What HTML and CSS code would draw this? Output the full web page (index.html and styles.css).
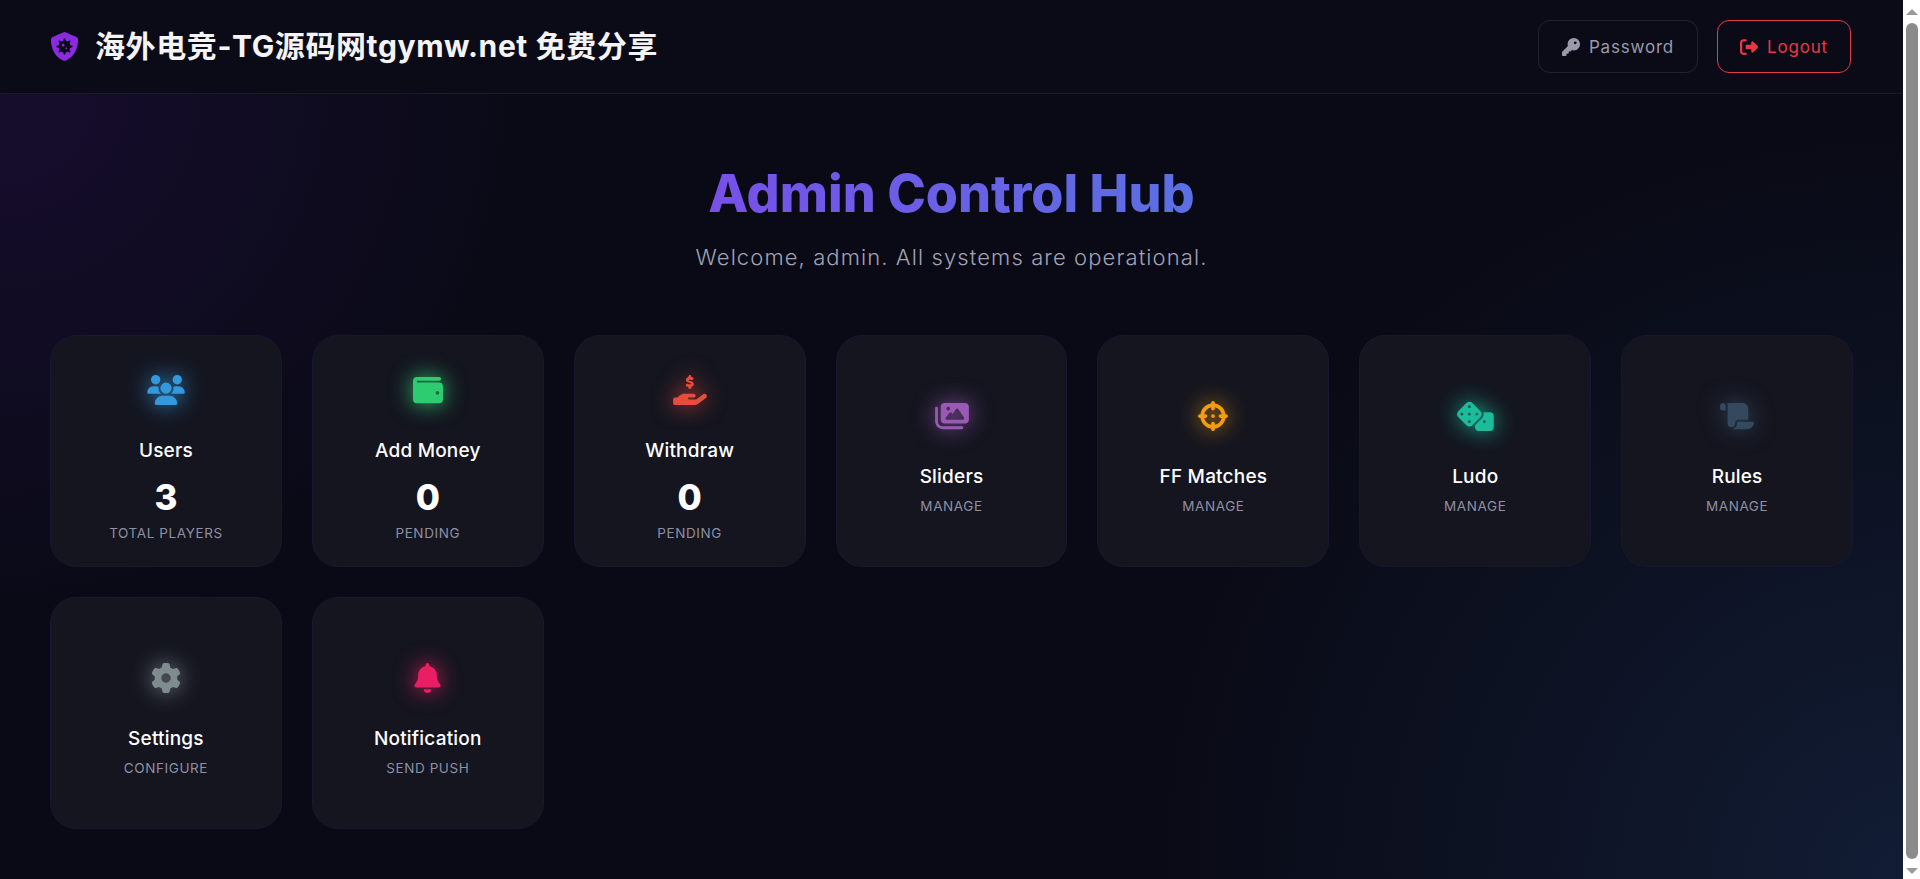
FILE: index.html
```html
<!DOCTYPE html>
<html lang="en">
<head>
<meta charset="utf-8">
<title>Admin Control Hub</title>
<link rel="stylesheet" href="styles.css">
</head>
<body>
<div class="page">
<header class="topbar">
  <div class="brand">
    <svg class="brand-icon" viewBox="0 0 512 512"><path d="M269.4 2.9C265.2 1 260.7 0 256 0s-9.2 1-13.4 2.9L54.3 82.8c-22 9.3-38.4 31-38.3 57.2c.5 99.2 41.3 280.7 213.6 363.2c16.7 8 36.1 8 52.8 0C454.7 420.7 495.5 239.2 496 140c.1-26.2-16.3-47.9-38.3-57.2L269.4 2.9zM256 112c8.8 0 16 7.2 16 16c0 33 39.9 49.5 63.2 26.2c6.2-6.2 16.4-6.2 22.6 0s6.2 16.4 0 22.6c-23.3 23.3-6.8 63.2 26.2 63.2c8.8 0 16 7.2 16 16s-7.2 16-16 16c-33 0-49.5 39.9-26.2 63.2c6.2 6.2 6.2 16.4 0 22.6s-16.4 6.2-22.6 0C312 335.5 272 352 272 385c0 8.8-7.2 16-16 16s-16-7.2-16-16c0-33-39.9-49.5-63.2-26.2c-6.2 6.2-16.4 6.2-22.6 0s-6.2-16.4 0-22.6C177.5 312 161 272 128 272c-8.8 0-16-7.2-16-16s7.2-16 16-16c33 0 49.5-39.9 26.2-63.2c-6.2-6.2-6.2-16.4 0-22.6s16.4-6.2 22.6 0C200 177.5 240 161 240 128c0-8.8 7.2-16 16-16zM232 256a24 24 0 1 0 0-48 24 24 0 1 0 0 48zm72 32a16 16 0 1 0 -32 0 16 16 0 1 0 32 0z"/></svg>
    <span class="brand-text">海外电竞-TG源码网tgymw.net 免费分享</span>
  </div>
  <nav class="actions">
    <a class="btn btn-muted"><svg class="btn-icon" viewBox="0 0 512 512"><path d="M336 352c97.2 0 176-78.8 176-176S433.2 0 336 0S160 78.8 160 176c0 18.7 2.9 36.8 8.3 53.7L7 391c-4.5 4.5-7 10.6-7 17v80c0 13.3 10.7 24 24 24h80c13.3 0 24-10.7 24-24V448h40c13.3 0 24-10.7 24-24V384h40c6.4 0 12.5-2.5 17-7l33.3-33.3c16.9 5.4 35 8.3 53.7 8.3zM376 96a40 40 0 1 1 0 80 40 40 0 1 1 0-80z"/></svg>Password</a>
    <a class="btn btn-danger"><svg class="btn-icon" viewBox="0 0 512 512"><path d="M377.9 105.9L500.7 228.7c7.2 7.2 11.3 17.1 11.3 27.3s-4.1 20.1-11.3 27.3L377.9 406.1c-6.4 6.4-15 9.9-24 9.9c-18.7 0-33.9-15.2-33.9-33.9l0-62.1-128 0c-17.7 0-32-14.3-32-32l0-64c0-17.7 14.3-32 32-32l128 0 0-62.1c0-18.7 15.2-33.9 33.9-33.9c9 0 17.6 3.6 24 9.9zM160 96L96 96c-17.7 0-32 14.3-32 32l0 256c0 17.7 14.3 32 32 32l64 0c17.7 0 32 14.3 32 32s-14.3 32-32 32l-64 0c-53 0-96-43-96-96L0 128C0 75 43 32 96 32l64 0c17.7 0 32 14.3 32 32s-14.3 32-32 32z"/></svg>Logout</a>
  </nav>
</header>
<main class="content">
  <section class="hero">
    <h1 class="hero-title">Admin Control Hub</h1>
    <p class="hero-sub">Welcome, admin. All systems are operational.</p>
  </section>
  <section class="grid">
    <a class="card">
      <span class="card-icon c-blue"><svg class="w40" viewBox="0 0 640 512"><path d="M144 0a80 80 0 1 1 0 160A80 80 0 1 1 144 0zM512 0a80 80 0 1 1 0 160A80 80 0 1 1 512 0zM0 298.7C0 239.8 47.8 192 106.7 192h42.7c15.9 0 31 3.5 44.6 9.7c-1.3 7.2-1.9 14.7-1.9 22.3c0 38.2 16.8 72.5 43.3 96c-.2 0-.4 0-.7 0H21.3C9.6 320 0 310.4 0 298.7zM405.3 320c-.2 0-.4 0-.7 0c26.6-23.5 43.3-57.8 43.3-96c0-7.6-.7-15-1.9-22.3c13.6-6.3 28.7-9.7 44.6-9.7h42.7C592.2 192 640 239.8 640 298.7c0 11.8-9.6 21.3-21.3 21.3H405.3zM224 224a96 96 0 1 1 192 0 96 96 0 1 1 -192 0zM128 485.3C128 411.7 187.7 352 261.3 352H378.7C452.3 352 512 411.7 512 485.3c0 14.7-11.9 26.7-26.7 26.7H154.7c-14.7 0-26.7-11.9-26.7-26.7z"/></svg></span>
      <h3 class="card-title">Users</h3>
      <div class="card-value">3</div>
      <div class="card-label">Total Players</div>
    </a>
    <a class="card">
      <span class="card-icon c-green"><svg viewBox="0 0 512 512"><path d="M64 32C28.7 32 0 60.7 0 96V416c0 35.3 28.7 64 64 64H448c35.3 0 64-28.7 64-64V192c0-35.3-28.7-64-64-64H80c-8.8 0-16-7.2-16-16s7.2-16 16-16H448c17.7 0 32-14.3 32-32s-14.3-32-32-32H64zM416 272a32 32 0 1 1 0 64 32 32 0 1 1 0-64z"/></svg></span>
      <h3 class="card-title">Add Money</h3>
      <div class="card-value">0</div>
      <div class="card-label">Pending</div>
    </a>
    <a class="card">
      <span class="card-icon c-red"><svg class="w36" viewBox="0 0 576 512"><path d="M312 24V34.5c6.4 1.2 12.6 2.7 18.2 4.2c12.8 3.4 20.4 16.6 17 29.4s-16.6 20.4-29.4 17c-10.9-2.9-21.1-4.9-30.2-5c-7.3-.1-14.7 1.7-19.4 4.4c-2.1 1.3-3.1 2.4-3.5 3c-.3 .5-.7 1.2-.7 2.8c0 .3 0 .5 0 .6c.2 .2 .9 1.2 3.3 2.6c5.8 3.5 14.4 6.2 26.5 9.8l.5 .1c10.3 3.1 23.7 7.1 34.4 13.6c11.8 7.2 22.8 18.9 23.1 37.2c.3 18.7-9.2 32.3-21.9 40.1c-6.1 3.8-12.8 6.3-19.8 7.7V216c0 13.3-10.7 24-24 24s-24-10.7-24-24V205.2c-9-2-17.4-4.8-24.7-7.3c-1.9-.6-3.7-1.2-5.5-1.8c-12.6-4.2-19.4-17.8-15.2-30.4s17.8-19.4 30.4-15.2c2.3 .8 4.5 1.5 6.6 2.2c12 4 20.4 6.8 29.6 7.1c7.7 .3 14.7-1.4 18.9-4c2.1-1.3 3.1-2.5 3.6-3.3c.4-.7 .9-1.9 .8-4.1l0-.2c0-1 0-2.1-4-4.6c-5.7-3.5-14.2-6.2-26.3-9.9l-1.9-.6c-10-3-22.7-6.9-32.9-13.1c-11.7-7.1-23-18.5-23.1-36.8c-.1-19.1 10.7-32.2 22.9-39.5c6.6-3.9 13.8-6.4 21-7.9V24c0-13.3 10.7-24 24-24s24 10.7 24 24zM568.2 336.3c13.1 17.8 9.3 42.8-8.5 55.9L433.1 485.5c-23.4 17.2-51.6 26.5-80.7 26.5H192 32c-17.7 0-32-14.3-32-32V416c0-17.7 14.3-32 32-32H68.8l44.9-36c22.7-18.2 50.9-28 80-28H272h16 64c17.7 0 32 14.3 32 32s-14.3 32-32 32H288 272c-8.8 0-16 7.2-16 16s7.2 16 16 16H392.6l119.7-88.2c17.8-13.1 42.8-9.3 55.9 8.5z"/></svg></span>
      <h3 class="card-title">Withdraw</h3>
      <div class="card-value">0</div>
      <div class="card-label">Pending</div>
    </a>
    <a class="card">
      <span class="card-icon c-purple"><svg class="w36" viewBox="0 0 576 512"><path d="M160 32c-35.3 0-64 28.7-64 64V320c0 35.3 28.7 64 64 64H512c35.3 0 64-28.7 64-64V96c0-35.3-28.7-64-64-64H160zM396 138.7l96 144c4.9 7.4 5.4 16.8 1.2 24.6S480.9 320 472 320H328 280 200c-9.2 0-17.6-5.3-21.6-13.6s-2.9-18.2 2.9-25.4l64-80c4.6-5.7 11.4-9 18.7-9s14.2 3.3 18.7 9l17.3 21.6 56-84C360.5 132 368 128 376 128s15.5 4 20 10.7zM192 128a32 32 0 1 1 64 0 32 32 0 1 1 -64 0zM48 120c0-13.3-10.7-24-24-24S0 106.7 0 120V344c0 75.1 60.9 136 136 136H456c13.3 0 24-10.7 24-24s-10.7-24-24-24H136c-48.6 0-88-39.4-88-88V120z"/></svg></span>
      <h3 class="card-title">Sliders</h3>
      <div class="card-label">Manage</div>
    </a>
    <a class="card">
      <span class="card-icon c-orange"><svg viewBox="0 0 512 512"><path d="M256 0c17.7 0 32 14.3 32 32V42.4c93.7 13.9 167.7 88 181.6 181.6H480c17.7 0 32 14.3 32 32s-14.3 32-32 32H469.6c-13.9 93.7-88 167.7-181.6 181.6V480c0 17.7-14.3 32-32 32s-32-14.3-32-32V469.6C130.3 455.7 56.3 381.7 42.4 288H32c-17.7 0-32-14.3-32-32s14.3-32 32-32H42.4C56.3 130.3 130.3 56.3 224 42.4V32c0-17.7 14.3-32 32-32zM107.4 288c12.5 58.3 58.4 104.1 116.6 116.6V384c0-17.7 14.3-32 32-32s32 14.3 32 32v20.6c58.3-12.5 104.1-58.4 116.6-116.6H384c-17.7 0-32-14.3-32-32s14.3-32 32-32h20.6C392.1 165.7 346.3 119.9 288 107.4V128c0 17.7-14.3 32-32 32s-32-14.3-32-32V107.4C165.7 119.9 119.9 165.7 107.4 224H128c17.7 0 32 14.3 32 32s-14.3 32-32 32H107.4zM256 224a32 32 0 1 1 0 64 32 32 0 1 1 0-64z"/></svg></span>
      <h3 class="card-title">FF Matches</h3>
      <div class="card-label">Manage</div>
    </a>
    <a class="card">
      <span class="card-icon c-teal"><svg class="w40" viewBox="0 0 640 512"><path d="M274.9 34.3c-28.1-28.1-73.7-28.1-101.8 0L34.3 173.1c-28.1 28.1-28.1 73.7 0 101.8L173.1 413.7c28.1 28.1 73.7 28.1 101.8 0L413.7 274.9c28.1-28.1 28.1-73.7 0-101.8L274.9 34.3zM200 224a24 24 0 1 1 48 0 24 24 0 1 1 -48 0zM96 200a24 24 0 1 1 0 48 24 24 0 1 1 0-48zM224 376a24 24 0 1 1 0-48 24 24 0 1 1 0 48zM352 200a24 24 0 1 1 0 48 24 24 0 1 1 0-48zM224 120a24 24 0 1 1 0-48 24 24 0 1 1 0 48zm96 328c0 35.3 28.7 64 64 64H576c35.3 0 64-28.7 64-64V256c0-35.3-28.7-64-64-64H461.7c11.6 36 3.1 77-25.4 105.5L320 413.8V448zM480 328a24 24 0 1 1 0 48 24 24 0 1 1 0-48z"/></svg></span>
      <h3 class="card-title">Ludo</h3>
      <div class="card-label">Manage</div>
    </a>
    <a class="card">
      <span class="card-icon c-slate"><svg class="w36" viewBox="0 0 576 512"><path d="M0 80v48c0 17.7 14.3 32 32 32H48 96V80c0-26.5-21.5-48-48-48S0 53.5 0 80zM112 32c10 13.4 16 30 16 48V384c0 35.3 28.7 64 64 64s64-28.7 64-64v-5.3c0-32.4 26.3-58.7 58.7-58.7H480V128c0-53-43-96-96-96H112zM464 480c61.9 0 112-50.1 112-112c0-8.8-7.2-16-16-16H314.7c-14.7 0-26.7 11.9-26.7 26.7V384c0 53-43 96-96 96H368h96z"/></svg></span>
      <h3 class="card-title">Rules</h3>
      <div class="card-label">Manage</div>
    </a>
    <a class="card">
      <span class="card-icon c-gray"><svg viewBox="0 0 512 512"><path d="M495.9 166.6c3.2 8.7 .5 18.4-6.4 24.6l-43.3 39.4c1.1 8.3 1.7 16.8 1.7 25.4s-.6 17.1-1.7 25.4l43.3 39.4c6.9 6.2 9.6 15.9 6.4 24.6c-4.4 11.9-9.7 23.3-15.8 34.3l-4.7 8.1c-6.6 11-14 21.4-22.1 31.2c-5.9 7.2-15.7 9.6-24.5 6.8l-55.7-17.7c-13.4 10.3-28.2 18.9-44 25.4l-12.5 57.1c-2 9.1-9 16.3-18.2 17.8c-13.8 2.3-28 3.5-42.5 3.5s-28.7-1.2-42.5-3.5c-9.2-1.5-16.2-8.7-18.2-17.8l-12.5-57.1c-15.8-6.5-30.6-15.1-44-25.4L83.1 425.9c-8.8 2.8-18.6 .3-24.5-6.8c-8.1-9.8-15.5-20.2-22.1-31.2l-4.7-8.1c-6.1-11-11.4-22.4-15.8-34.3c-3.2-8.7-.5-18.4 6.4-24.6l43.3-39.4C64.6 273.1 64 264.6 64 256s.6-17.1 1.7-25.4L22.4 191.2c-6.9-6.2-9.6-15.9-6.4-24.6c4.4-11.9 9.7-23.3 15.8-34.3l4.7-8.1c6.6-11 14-21.4 22.1-31.2c5.9-7.2 15.7-9.6 24.5-6.8l55.7 17.7c13.4-10.3 28.2-18.9 44-25.4l12.5-57.1c2-9.1 9-16.3 18.2-17.8C227.3 1.2 241.5 0 256 0s28.7 1.2 42.5 3.5c9.2 1.5 16.2 8.7 18.2 17.8l12.5 57.1c15.8 6.5 30.6 15.1 44 25.4l55.7-17.7c8.8-2.8 18.6-.3 24.5 6.8c8.1 9.8 15.5 20.2 22.1 31.2l4.7 8.1c6.1 11 11.4 22.4 15.8 34.3zM256 336a80 80 0 1 0 0-160 80 80 0 1 0 0 160z"/></svg></span>
      <h3 class="card-title">Settings</h3>
      <div class="card-label">Configure</div>
    </a>
    <a class="card">
      <span class="card-icon c-pink"><svg class="w26" viewBox="0 0 448 512"><path d="M224 0c-17.7 0-32 14.3-32 32V51.2C119 66 64 130.6 64 208v18.8c0 47-17.3 92.4-48.5 127.6l-7.4 8.3c-8.4 9.4-10.4 22.9-5.3 34.4S19.4 416 32 416H416c12.6 0 24-7.4 29.2-18.9s3.1-25-5.3-34.4l-7.4-8.3C401.3 319.2 384 273.9 384 226.8V208c0-77.4-55-142-128-156.8V32c0-17.7-14.3-32-32-32zm45.3 493.3c12-12 18.7-28.3 18.7-45.3H224 160c0 17 6.7 33.3 18.7 45.3s28.3 18.7 45.3 18.7s33.3-6.7 45.3-18.7z"/></svg></span>
      <h3 class="card-title">Notification</h3>
      <div class="card-label">Send Push</div>
    </a>
  </section>
</main>
</div>
<aside class="scrollbar">
  <span class="sb-up"></span>
  <span class="sb-thumb"></span>
  <span class="sb-down"></span>
</aside>
</body>
</html>
```
FILE: styles.css
```css
* { box-sizing: border-box; margin: 0; padding: 0; }
html { background: #090a15; overflow: hidden; }
body {
  font-family: Inter, "Noto Sans CJK SC", sans-serif;
  color: #fff;
  height: 100vh;
  overflow: hidden;
  display: flex;
}
.page {
  flex: 1;
  min-width: 0;
  background:
    radial-gradient(circle at 0% 10%, rgba(100, 30, 190, 0.15), transparent 27%),
    radial-gradient(circle at 100% 100%, rgba(45, 85, 150, 0.24), transparent 36%),
    #090a15;
}
.scrollbar {
  width: 17px;
  flex: none;
  background: #fff;
  display: flex;
  flex-direction: column;
  align-items: center;
}
.sb-up, .sb-down { width: 0; height: 0; border-left: 6px solid transparent; border-right: 6px solid transparent; }
.sb-up { border-bottom: 6px solid #9a9a9a; margin-top: 9px; }
.sb-thumb { width: 12px; flex: 1; margin: 8px 0 9px; background: #8b8b8b; border-radius: 6px; }
.sb-down { border-top: 6px solid #9a9a9a; margin-bottom: 5px; }
.topbar {
  height: 94px;
  padding: 0 50px;
  display: flex;
  align-items: center;
  justify-content: space-between;
  background: #0b0b17;
  border-bottom: 1px solid #1c1c27;
}
.brand { display: flex; align-items: center; gap: 16px; }
.brand-icon { width: 29px; height: 29px; fill: #8a2be2; }
.brand-text { font-size: 30px; letter-spacing: 0.6px; font-weight: 700; color: #f4f4f6; line-height: 38px; padding-bottom: 2px; white-space: nowrap; }
.actions { display: flex; gap: 19px; padding-right: 2px; }
.btn {
  height: 53px;
  display: flex;
  align-items: center;
  justify-content: center;
  gap: 9px;
  border-radius: 12px;
  font-size: 17px;
  letter-spacing: 0.8px;
  border: 1px solid;
}
.btn-icon { width: 18px; height: 18px; fill: currentColor; }
.btn-muted { width: 160px; color: #9a9aab; border-color: #23232e; }
.btn-danger { width: 134px; color: #e63946; border-color: #e63946; }
.content { padding: 0 50px 50px; }
.hero { text-align: center; padding-top: 67px; }
.hero-title {
  display: inline-block;
  font-size: 52px;
  line-height: 66px;
  font-weight: 800;
  background: linear-gradient(90deg, #7850e8, #5a70e2);
  -webkit-background-clip: text;
  background-clip: text;
  color: transparent;
}
.hero-sub { font-size: 22px; letter-spacing: 1.1px; line-height: 30px; font-weight: 300; color: #a2a2b6; margin-top: 15px; }
.grid {
  display: grid;
  grid-template-columns: repeat(7, 1fr);
  gap: 30px;
  margin-top: 63px;
}
.card {
  aspect-ratio: 1;
  padding-top: 2px;
  display: flex;
  flex-direction: column;
  align-items: center;
  justify-content: center;
  background: #14151f;
  border: 1px solid #1b1630;
  border-radius: 26px;
  text-align: center;
}
.card-icon { height: 58px; margin-bottom: 19px; display: flex; align-items: center; justify-content: center; }
.card-icon svg { width: 30px; height: 30px; fill: currentColor; filter: drop-shadow(0 0 11px var(--glow)); }
.card-icon svg.w40 { width: 38px; }
.card-icon svg.w36 { width: 34px; }
.card-icon svg.w26 { width: 27px; }
.card-title { font-size: 19px; letter-spacing: 0.2px; line-height: 26px; font-weight: 500; margin-bottom: 6px; }
.card-value { font-size: 35px; line-height: 44px; font-weight: 800; margin-top: 5px; margin-bottom: 4px; }
.card-label { font-size: 13.5px; line-height: 20px; letter-spacing: 0.6px; text-transform: uppercase; color: #8f8fa3; }
.c-blue { color: #3498db; --glow: #3498db; }
.c-green { color: #2ecc71; --glow: #2ecc71; }
.c-red { color: #e74c3c; --glow: #e74c3c; }
.c-purple { color: #9b59b6; --glow: #9b59b6; }
.c-orange { color: #f39c12; --glow: #f39c12; }
.c-teal { color: #1abc9c; --glow: #1abc9c; }
.c-slate { color: #34495e; --glow: #34495e; }
.c-gray { color: #7f8c8d; --glow: #7f8c8d; }
.c-pink { color: #e91e63; --glow: #e91e63; }
```
